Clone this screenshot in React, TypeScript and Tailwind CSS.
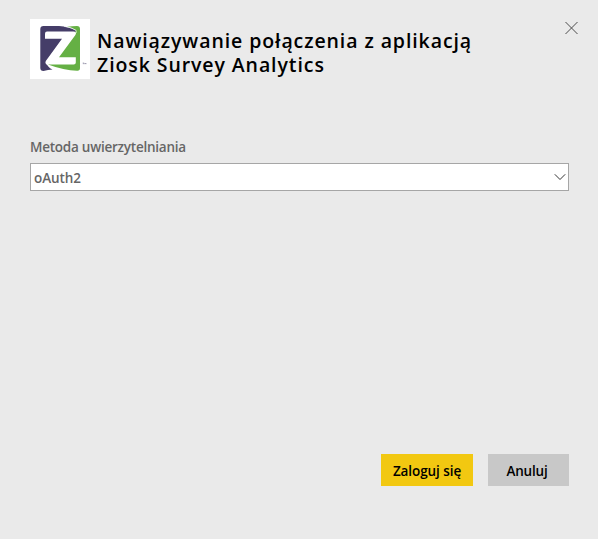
function Logo() {
  return (
    <svg viewBox="0 0 60 60" className="size-[60px] shrink-0 bg-white" aria-label="Ziosk">
      <path d="M10.3 10Q10.3 7 13.5 7H29Q39 7.7 46 11.5V15L34 18L16 43Q17 48 22.5 50.6Q18 51 13.5 52Q10.3 52 10.3 49Z" fill="#453d68" />
      <path d="M37 7.8Q42 7 47 7Q50 7 50 10V49Q50 52 47 51.7Q34 51.5 18 45.5L28 38L45 14L45.8 11Q42 8.5 37 7.8Z" fill="#65b044" />
      <path d="M17 12.6H43.2Q47.4 13 45.4 16L29 38.2H45.8V43.5Q45.8 45.6 43.7 45.6H18Q14.4 45.2 15.8 42L32 19.8H15V14.8Q15 12.6 17 12.6Z" fill="#fff" />
      <path d="M34 7.3Q42 8.3 46.2 11.5V14" stroke="#fff" strokeWidth=".6" fill="none" />
      <path d="M16 44.5Q20 48.5 28 50.2" stroke="#fff" strokeWidth=".8" fill="none" />
      <path d="M52.7 44H54.2M53.4 44V45.2M54.8 45.2V44L55.4 44.7L56 44V45.2" stroke="#85819b" strokeWidth=".6" fill="none" />
    </svg>
  );
}

export default function App() {
  return (
    <main className="flex h-[539px] w-[598px] flex-col bg-[#eaeaea] pr-[29px] pl-[30px] font-['Open_Sans','Noto_Sans',sans-serif] font-semibold">
      <header className="flex pt-[19px]">
        <Logo />
        <h1 className="ml-[7px] w-[400px] pt-[10px] text-[19.5px] leading-6 font-semibold tracking-[0.91px] text-black">
          Nawiązywanie połączenia z aplikacją Ziosk Survey Analytics
        </h1>
        <button aria-label="Zamknij" className="-mr-[10px] ml-auto h-[18px] w-[14px]">
          <svg viewBox="0 0 14 18" className="h-[18px] w-[14px]" fill="none" stroke="#4a4a4a" strokeWidth="1">
            <path d="M.5 3L12.5 15M12.5 3L.5 15" />
          </svg>
        </button>
      </header>
      <label className="mt-[58px] block h-[26px] text-[13.5px] leading-5 tracking-[-0.24px] text-[#666]">Metoda uwierzytelniania</label>
      <button className="flex h-7 w-full items-center justify-between border border-[#a6a6a6] bg-white pr-[2px] pl-[3px] text-[13.5px] text-[#666]">
        <span className="pt-[2px] tracking-[-0.1px]">oAuth2</span>
        <svg viewBox="0 0 12 8" className="h-2 w-3" fill="none" stroke="#333" strokeWidth="1">
          <path d="M.8 1.3L6 6.5L11.2 1.3" />
        </svg>
      </button>
      <footer className="mt-auto mb-[53px] flex justify-end gap-[15px] text-[13.5px] text-black">
        <button className="h-8 w-[92px] bg-[#f2c811] pt-[2px] tracking-[-0.08px]">Zaloguj się</button>
        <button className="h-8 w-[81px] bg-[#c8c8c8] pt-[2px] pr-[3px] tracking-[-0.2px]">Anuluj</button>
      </footer>
    </main>
  );
}
